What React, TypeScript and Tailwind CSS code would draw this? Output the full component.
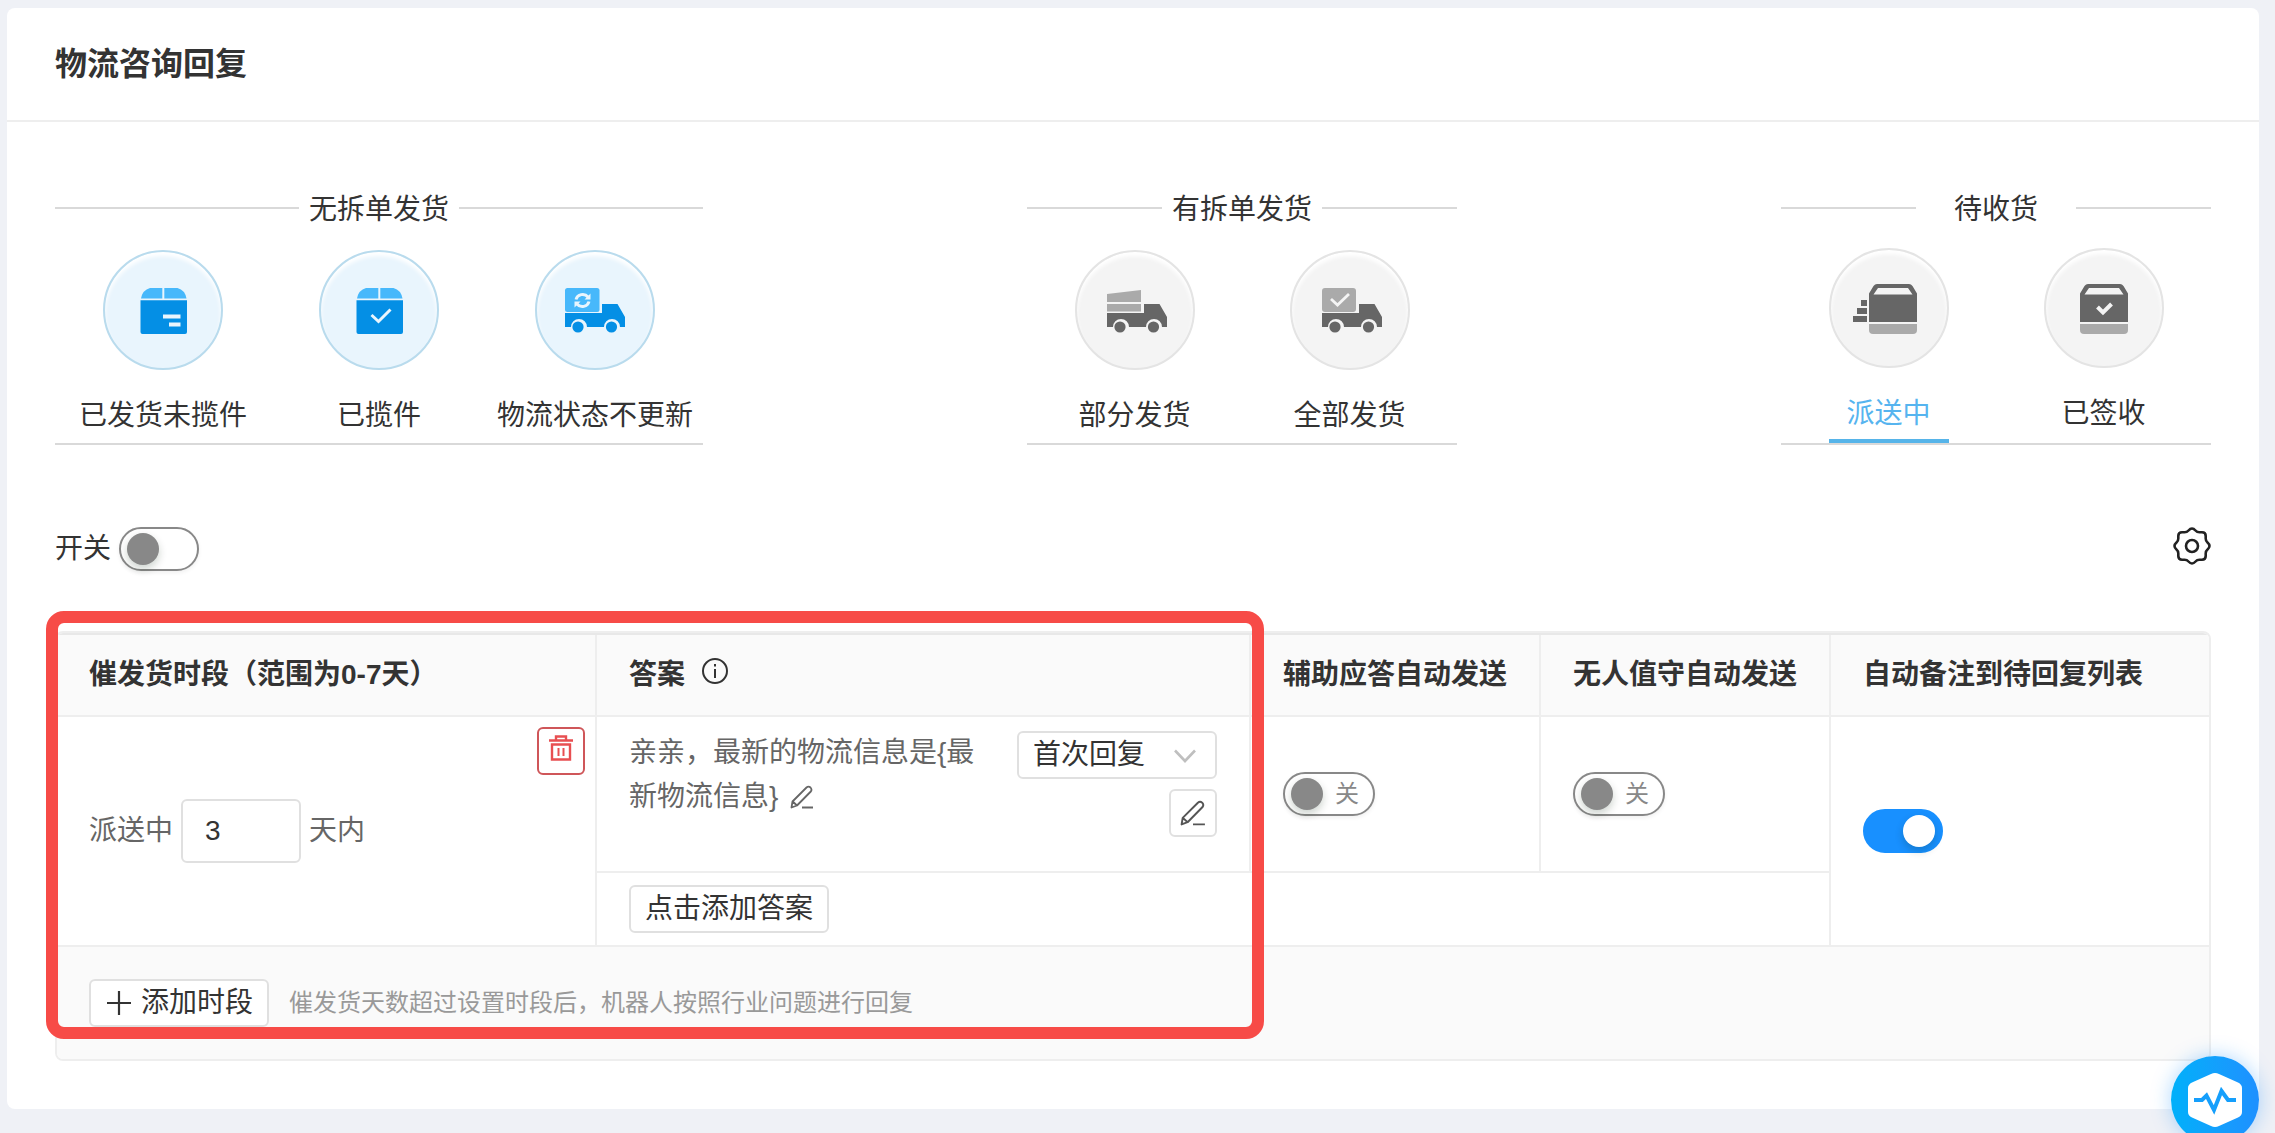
import type { ReactNode } from "react";

const TruckBody = ({ color }: { color: string }) => (
  <g fill={color}>
    <path d="M32 63H69V54H84.5L92 67V77H87A7 7 0 0 0 71 77H54A7 7 0 0 0 38 77H32Z" />
    <circle cx="45" cy="77" r="5.6" />
    <circle cx="78.500" cy="77" r="5.6" />
  </g>
);

const BoxIcon = ({ children }: { children: ReactNode }) => (
  <>
    <path fill="#47b8fb" d="M47 38H59.300V48.500H38Q39.500 40 47 38Z" />
    <path fill="#47b8fb" d="M61.300 38H74.500Q82 40 83.500 48.500H61.300Z" />
    <path fill="#048fe5" d="M37.500 50.300H84V82Q84 84 82 84H39.500Q37.500 84 37.500 82Z" />
    {children}
  </>
);

const OpenBox = ({ x }: { x: number }) => (
  <g transform={`translate(${x} 0)`}>
    <path
      fill="#666"
      fillRule="evenodd"
      d="M8 36H40Q42 36 43.500 38L48 45.500V74H0V45.500L4.500 38Q6 36 8 36ZM9 40L4.500 46.500H43.500L39 40Z"
    />
    <path fill="#aaa" d="M0 76H48V82Q48 86 44 86H4Q0 86 0 82Z" />
  </g>
);

const ICONS: Record<string, ReactNode> = {
  shipped: (
    <BoxIcon>
      <path fill="#e9f5fd" d="M60 64.500H77.500V68.500H60ZM66 72.500H77.500V76.500H66Z" />
    </BoxIcon>
  ),
  collected: (
    <BoxIcon>
      <path d="M52.500 65L59.500 71.500L71.500 59.500" fill="none" stroke="#e9f5fd" strokeWidth="3" />
    </BoxIcon>
  ),
  stale: (
    <>
      <rect x="30" y="38" width="34.500" height="24" rx="2.500" fill="#47b8fb" />
      <g transform="translate(-2 0)">
        <TruckBody color="#048fe5" />
      </g>
      <g fill="none" stroke="#e9f5fd" strokeWidth="3">
        <path d="M41 49.500A6.800 6.500 0 0 1 53 47" />
        <path d="M54 51.500A6.800 6.500 0 0 1 42 54" />
      </g>
      <path fill="#e9f5fd" d="M55.500 43.500V49.500H49.500ZM39.500 57.500V51.500H45.500Z" />
    </>
  ),
  partial: (
    <>
      <path fill="#aaa" d="M32 44L66 40V52H32ZM32 54H66V61.500H32Z" />
      <TruckBody color="#666" />
    </>
  ),
  all: (
    <>
      <rect x="32" y="38" width="34" height="24" rx="3" fill="#aaa" />
      <path d="M41 49L47.500 55L59 44" fill="none" stroke="#f4f4f4" strokeWidth="2.800" />
      <TruckBody color="#666" />
    </>
  ),
  delivering: (
    <>
      <OpenBox x={40} />
      <path fill="#666" d="M32 52H38V58H32ZM28 60H38V66H28ZM24 68H38V74H24Z" />
    </>
  ),
  signed: (
    <>
      <OpenBox x={36} />
      <path d="M53.500 59L59 64.500L67.500 56" fill="none" stroke="#f4f4f4" strokeWidth="4" />
    </>
  ),
};

type Group = {
  title: string;
  blue?: boolean;
  items: { label: string; icon: string; active?: boolean }[];
};

const GROUPS: Group[] = [
  {
    title: "无拆单发货",
    blue: true,
    items: [
      { label: "已发货未揽件", icon: "shipped" },
      { label: "已揽件", icon: "collected" },
      { label: "物流状态不更新", icon: "stale" },
    ],
  },
  {
    title: "有拆单发货",
    items: [
      { label: "部分发货", icon: "partial" },
      { label: "全部发货", icon: "all" },
    ],
  },
  {
    title: "待收货",
    items: [
      { label: "派送中", icon: "delivering", active: true },
      { label: "已签收", icon: "signed" },
    ],
  },
];

const StatusGroup = ({ group }: { group: Group }) => {
  const hasActive = group.items.some((item) => item.active);

  return (
    <section className="border-b-2 border-[#d9d9d9]">
      <div className="flex items-center">
        <span className="h-0.5 flex-1 bg-[#d9d9d9]" />
        <h2 className="w-40 pt-1 text-center leading-8">{group.title}</h2>
        <span className="h-0.5 flex-1 bg-[#d9d9d9]" />
      </div>
      <div className={`flex ${hasActive ? "pt-[22px]" : "pt-6"}`}>
        {group.items.map((item) => (
          <button
            key={item.label}
            type="button"
            className={`flex flex-col items-center whitespace-nowrap ${
              group.blue ? "w-[216px]" : "w-[215px]"
            }`}
          >
            <span
              className={`block size-[120px] rounded-full border-2 shadow-[inset_0_4px_4px_#fff] ${
                group.blue ? "border-[#b9dbed] bg-[#e9f5fd]" : "border-[#e4e4e4] bg-[#f4f4f4]"
              }`}
            >
              <svg viewBox="2 2 116 116" className="size-full" aria-hidden="true">
                {ICONS[item.icon]}
              </svg>
            </span>
            <span
              className={`w-[120px] border-b-4 pt-[26px] ${
                item.active ? "border-[#56b4e9] text-[#56b4ef]" : "border-transparent"
              } ${hasActive ? "h-[75px]" : "h-[73px]"}`}
            >
              <span className="flex justify-center leading-10">{item.label}</span>
            </span>
          </button>
        ))}
      </div>
    </section>
  );
};

type SwitchProps = { label: string; text?: string; checked?: boolean };

const Switch = ({ label, text, checked }: SwitchProps) => (
  <label
    className={`flex h-11 cursor-pointer items-center rounded-full border-2 px-1.5 ${
      checked
        ? "justify-end border-[#1890ff] bg-[#1890ff]"
        : "border-[#888] bg-white shadow-[0_2px_4px_rgba(0,0,0,0.06)]"
    } ${text ? "w-[92px]" : "w-20"}`}
  >
    <input type="checkbox" role="switch" aria-label={label} defaultChecked={checked} className="sr-only" />
    <span
      className={`size-8 rounded-full shadow-[0_4px_8px_rgba(0,35,11,0.2)] ${
        checked ? "bg-white" : "bg-[#888]"
      }`}
    />
    {text && <span className="ml-3 text-2xl leading-8 text-[#888]">{text}</span>}
  </label>
);

const PencilIcon = ({ className }: { className: string }) => (
  <svg
    viewBox="0 0 24 24"
    className={className}
    fill="none"
    stroke="currentColor"
    strokeWidth="1.800"
    strokeLinejoin="round"
    aria-hidden="true"
  >
    <path d="M1.500 22.500L2.500 16.500L16.500 2.500Q18.500 0.800 20.500 2.500Q22.300 4.500 20.800 6.500L7 20.500ZM2.700 16.500L7 20.500M12 22.500H23" />
  </svg>
);

const Th = ({ children }: { children: ReactNode }) => (
  <th className="h-[82px] border-r-2 border-b-2 border-[#eee] px-8 text-left font-bold whitespace-nowrap last:border-r-0">
    {children}
  </th>
);

const App = () => {
  return (
    <div className="min-h-screen bg-[#eff1f6] pt-2 pr-4 pb-6 pl-[7px] font-['Liberation_Sans','Noto_Sans_CJK_SC',sans-serif] text-[28px] leading-10 text-[#333]">
      <main className="rounded-lg bg-white">
        <header className="border-b-2 border-[#eee] px-12 py-8">
          <h1 className="text-[32px] leading-12 font-bold">物流咨询回复</h1>
        </header>

        <div className="px-12 pt-[68px] pb-12">
          <div className="flex justify-between">
            {GROUPS.map((group) => (
              <StatusGroup key={group.title} group={group} />
            ))}
          </div>

          <div className="mt-[82px] flex items-start justify-between">
            <div className="flex items-center gap-2">
              <span>开关</span>
              <Switch label="开关" />
            </div>
            <button type="button" aria-label="设置">
              <svg
                viewBox="1 1 38 38"
                className="size-[38px]"
                fill="none"
                stroke="#222"
                strokeWidth="2.600"
                strokeLinejoin="round"
                aria-hidden="true"
              >
                <path d="M16.500 4.500Q20 0.500 23.500 4.500Q25 6.300 27.500 6.300H30Q33.700 6.300 33.700 10V12.500Q33.700 15 35.500 16.500Q39.500 20 35.500 23.500Q33.700 25 33.700 27.500V30Q33.700 33.700 30 33.700H27.500Q25 33.700 23.500 35.500Q20 39.500 16.500 35.500Q15 33.700 12.500 33.700H10Q6.300 33.700 6.300 30V27.500Q6.300 25 4.500 23.500Q0.500 20 4.500 16.500Q6.300 15 6.300 12.500V10Q6.300 6.300 10 6.300H12.500Q15 6.300 16.500 4.500Z" />
                <circle cx="20" cy="20" r="6" />
              </svg>
            </button>
          </div>

          <div className="relative mt-[60px]">
            <div className="overflow-hidden rounded-lg border-2 border-[#eee]">
              <table className="w-full table-fixed border-separate border-spacing-0 border-t-2 border-[#e8e8e8]">
                <colgroup>
                  <col className="w-[540px]" />
                  <col className="w-[654px]" />
                  <col className="w-[290px]" />
                  <col className="w-[290px]" />
                  <col />
                </colgroup>
                <thead className="bg-[#fafafa]">
                  <tr>
                    <Th>催发货时段（范围为0-7天）</Th>
                    <Th>
                      <span className="flex items-center gap-4">
                        答案
                        <svg
                          viewBox="0 0 28 28"
                          className="mb-2 size-7"
                          fill="none"
                          stroke="#333"
                          strokeWidth="2"
                          aria-hidden="true"
                        >
                          <circle cx="14" cy="14" r="12" />
                          <path d="M14 12V21M14 7V9.500" />
                        </svg>
                      </span>
                    </Th>
                    <Th>辅助应答自动发送</Th>
                    <Th>无人值守自动发送</Th>
                    <Th>自动备注到待回复列表</Th>
                  </tr>
                </thead>
                <tbody>
                  <tr>
                    <td rowSpan={2} className="relative border-r-2 border-b-2 border-[#eee] px-8 text-[#666]">
                      <button
                        type="button"
                        aria-label="删除"
                        className="absolute top-2.5 right-2.5 flex size-12 justify-center rounded-md border-2 border-[#cf5659] pt-1.5 text-[#e84f51]"
                      >
                        <svg viewBox="0 0 26 26" className="size-[26px]" fill="none" stroke="currentColor" aria-hidden="true">
                          <path strokeWidth="2.400" d="M1 5.500H25M8 5V1.500H18V5M4 9.500H22V24.500H4Z" />
                          <path strokeWidth="2" d="M10.500 13V21M15.500 13V21" />
                        </svg>
                      </button>
                      <div className="flex items-center gap-2">
                        <label htmlFor="days">派送中</label>
                        <input
                          id="days"
                          defaultValue="3"
                          className="h-16 w-[120px] rounded-md border-2 border-[#e0e0e0] bg-white px-[22px] text-[#333]"
                        />
                        <span>天内</span>
                      </div>
                    </td>
                    <td className="h-[156px] border-r-2 border-b-2 border-[#eee] px-8 align-top">
                      <div className="flex justify-between pt-3.5">
                        <p className="w-[360px] leading-11 text-[#666]">
                          {"亲亲，最新的物流信息是{最新物流信息}"}
                          <button type="button" aria-label="编辑答案" className="ml-3 align-middle">
                            <PencilIcon className="mb-1 size-6" />
                          </button>
                        </p>
                        <div className="flex flex-col items-end gap-2.5">
                          <div className="relative">
                            <select
                              aria-label="回复时机"
                              className="block h-12 w-[200px] appearance-none rounded-md border-2 border-[#e0e0e0] bg-white pr-10 pl-3.5 leading-11"
                            >
                              <option>首次回复</option>
                            </select>
                            <svg
                              viewBox="0 0 24 14"
                              className="pointer-events-none absolute top-[18px] right-5 h-3.5 w-6"
                              fill="none"
                              stroke="#bfbfbf"
                              strokeWidth="2.600"
                              aria-hidden="true"
                            >
                              <path d="M2 1.500L12 12L22 1.500" />
                            </svg>
                          </div>
                          <button
                            type="button"
                            aria-label="编辑"
                            className="flex size-12 items-center justify-center rounded-md border-2 border-[#e0e0e0] text-[#555]"
                          >
                            <PencilIcon className="size-[26px]" />
                          </button>
                        </div>
                      </div>
                    </td>
                    <td className="border-r-2 border-b-2 border-[#eee] px-8">
                      <Switch label="辅助应答自动发送" text="关" />
                    </td>
                    <td className="border-r-2 border-b-2 border-[#eee] px-8">
                      <Switch label="无人值守自动发送" text="关" />
                    </td>
                    <td rowSpan={2} className="border-b-2 border-[#eee] px-8">
                      <Switch label="自动备注到待回复列表" checked />
                    </td>
                  </tr>
                  <tr>
                    <td colSpan={3} className="border-r-2 border-b-2 border-[#eee] px-8 py-3">
                      <button
                        type="button"
                        className="block h-12 rounded-md border-2 border-[#e0e0e0] px-3.5 leading-11"
                      >
                        点击添加答案
                      </button>
                    </td>
                  </tr>
                </tbody>
                <tfoot className="bg-[#fafafa]">
                  <tr>
                    <td colSpan={5} className="p-8">
                      <div className="flex items-center gap-5">
                        <button
                          type="button"
                          className="flex h-12 w-[180px] items-center gap-2 rounded-md border-2 border-[#e0e0e0] bg-white px-3.5 leading-10"
                        >
                          <svg viewBox="0 0 28 28" className="size-7" stroke="#333" strokeWidth="2.200" aria-hidden="true">
                            <path d="M14 2V26M2 14H26" />
                          </svg>
                          添加时段
                        </button>
                        <span className="text-2xl text-[#999]">
                          催发货天数超过设置时段后，机器人按照行业问题进行回复
                        </span>
                      </div>
                    </td>
                  </tr>
                </tfoot>
              </table>
            </div>

            {/* highlight frame over the first two columns */}
            <div className="pointer-events-none absolute -top-5 bottom-[22px] -left-[9px] w-[1218px] rounded-[18px] border-12 border-[#f74b47]" />
          </div>
        </div>
      </main>

      <button
        type="button"
        aria-label="智能诊断"
        className="fixed right-4 -bottom-[11px] flex size-[88px] items-center justify-center rounded-full bg-linear-to-r from-[#00b0fa] to-[#1e90ff] shadow-[0_0_20px_rgba(24,144,255,0.35)]"
      >
        <svg viewBox="0 0 54 54" className="size-[54px]" aria-hidden="true">
          <path fill="#fff" d="M23 1Q27 -0.800 31 1L50 9.500Q54 11.500 54 15V39Q54 42.500 50 44.500L31 53Q27 54.800 23 53L4 44.500Q0 42.500 0 39V15Q0 11.500 4 9.500Z" />
          <path d="M6 27H14L18.500 22.500L26 37L33.500 18L40 27H48" fill="none" stroke="#159ffc" strokeWidth="4" />
        </svg>
      </button>
    </div>
  );
};

export default App;
